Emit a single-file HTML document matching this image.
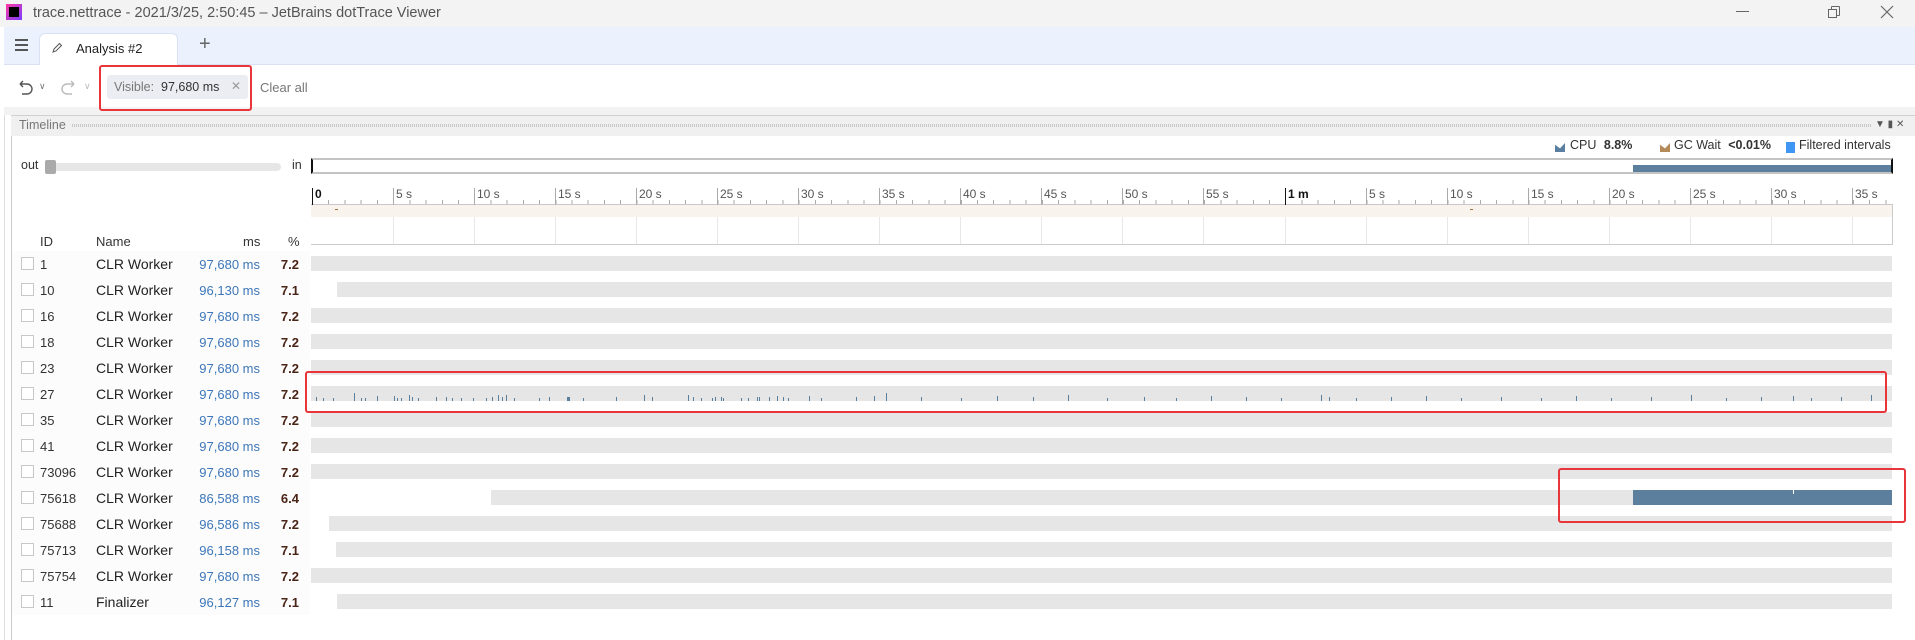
<!DOCTYPE html>
<html><head><meta charset="utf-8"><style>
*{margin:0;padding:0;box-sizing:border-box}
body{width:1915px;height:640px;overflow:hidden;background:#fff;font-family:"Liberation Sans",sans-serif;position:relative;color:#222}
.a{position:absolute;white-space:nowrap}
.row{position:absolute;left:0;width:1915px;height:26px;font-size:13px}
.cb{position:absolute;left:21px;top:6px;width:13px;height:13px;border:1px solid #c8c8c8;background:#fff}
.id{position:absolute;left:40px;top:6px;color:#333}
.nm{position:absolute;left:96px;top:5px;color:#222;font-size:14px}
.ms{position:absolute;right:1655px;top:6px;color:#3d76b8}
.pc{position:absolute;right:1616px;top:6px;color:#4a2416;font-weight:bold}
.bar{position:absolute;top:5px;height:15px;background:#e6e6e6;right:23px}
.maj{position:absolute;top:188px;width:1px;height:17px;background:#aaa}
.lab{position:absolute;top:187px;font-size:12px;color:#555}
.gl{position:absolute;top:217px;width:1px;height:27px;background:#e8e8e8}
.tk{position:absolute;bottom:0;width:1px;background:#5a7f9c}
</style></head><body>
<!-- title bar -->
<div class="a" style="left:0;top:0;width:1915px;height:27px;background:#f3f3f3"></div>
<div class="a" style="left:6px;top:4px;width:16px;height:16px;background:linear-gradient(135deg,#ff3aa0,#7a3cff);"></div>
<div class="a" style="left:9px;top:7px;width:10px;height:10px;background:#000"></div>
<div class="a" style="left:33px;top:5px;font-size:14.5px;color:#555">trace.nettrace - 2021/3/25, 2:50:45 – JetBrains dotTrace Viewer</div>
<div class="a" style="left:1736px;top:11px;width:13px;height:1px;background:#666"></div>
<div class="a" style="left:1831px;top:6px;width:9px;height:10px;border:1px solid #666;border-radius:1px"></div>
<div class="a" style="left:1828px;top:9px;width:9px;height:9px;border:1px solid #666;background:#f3f3f3"></div>
<svg class="a" style="left:1880px;top:5px" width="14" height="14"><path d="M1 1L13 13M13 1L1 13" stroke="#666" stroke-width="1.2"/></svg>
<!-- tab bar -->
<div class="a" style="left:4px;top:27px;width:1911px;height:38px;background:#ebf2fe;border-bottom:1px solid #d8e2f2"></div>
<div class="a" style="left:15px;top:39px;width:13px;height:2px;background:#555;box-shadow:0 5px 0 #555,0 10px 0 #555"></div>
<div class="a" style="left:39px;top:33px;width:139px;height:32px;background:#fff;border:1px solid #d8e2f2;border-bottom:none;border-radius:6px 6px 0 0"></div>
<svg class="a" style="left:51px;top:42px" width="12" height="12"><path d="M2 10L3 7L8.5 1.5L10.5 3.5L5 9Z" fill="none" stroke="#555" stroke-width="1"/></svg>
<div class="a" style="left:76px;top:41px;font-size:13px;color:#222">Analysis #2</div>
<div class="a" style="left:199px;top:33px;font-size:20px;color:#666">+</div>
<!-- toolbar -->
<svg class="a" style="left:16px;top:79px" width="18" height="16"><path d="M4 5H11A5 5 0 0 1 11 15H6M4 5L7 2M4 5L7 8" fill="none" stroke="#555" stroke-width="1.4"/></svg>
<div class="a" style="left:39px;top:81px;font-size:9px;color:#777">∨</div>
<svg class="a" style="left:60px;top:79px" width="18" height="16"><path d="M14 5H7A5 5 0 0 0 7 15H12M14 5L11 2M14 5L11 8" fill="none" stroke="#bbb" stroke-width="1.4"/></svg>
<div class="a" style="left:84px;top:81px;font-size:9px;color:#bbb">∨</div>
<!-- gap -->
<div class="a" style="left:4px;top:107px;width:1911px;height:8px;background:#f2f2f2"></div>
<div class="a" style="left:107px;top:75px;width:141px;height:24px;background:#ebedf2;border-radius:3px"></div>
<div class="a" style="left:114px;top:80px;font-size:12.5px;color:#777">Visible:&nbsp; <span style="color:#333">97,680 ms</span></div>
<div class="a" style="left:231px;top:79px;font-size:12px;color:#999">✕</div>
<div class="a" style="left:99px;top:65px;width:153px;height:46px;border:2px solid #e8353b;border-radius:3px"></div>
<div class="a" style="left:260px;top:80px;font-size:13px;color:#777">Clear all</div>
<div class="a" style="left:4px;top:115px;width:1px;height:525px;background:#ddd"></div>
<div class="a" style="left:11px;top:115px;width:1px;height:525px;background:#ccc"></div>
<div class="a" style="left:11px;top:115px;width:1904px;height:21px;background:#f0f0f0;border-top:1px solid #d0d0d0"></div>
<div class="a" style="left:19px;top:118px;font-size:12.5px;color:#777">Timeline</div>
<div class="a" style="left:72px;top:124px;width:1800px;height:3px;background:repeating-linear-gradient(90deg,#c8c8c8 0 1px,transparent 1px 2px)"></div>
<div class="a" style="left:1875px;top:119px;font-size:10px;color:#555">▼ ▮ ✕</div>
<!-- legend -->
<div class="a" style="left:1555px;top:143px;width:10px;height:9px;background:#5b7fa0;clip-path:polygon(0 20%,50% 60%,100% 0,100% 100%,0 100%)"></div>
<div class="a" style="left:1570px;top:138px;font-size:12.5px;color:#333">CPU <b style="margin-left:4px">8.8%</b></div>
<div class="a" style="left:1660px;top:143px;width:10px;height:9px;background:#b58a5a;clip-path:polygon(0 20%,50% 60%,100% 0,100% 100%,0 100%)"></div>
<div class="a" style="left:1674px;top:138px;font-size:12.5px;color:#333">GC Wait <b style="margin-left:4px">&lt;0.01%</b></div>
<div class="a" style="left:1786px;top:142px;width:9px;height:11px;background:#3f96f3"></div>
<div class="a" style="left:1799px;top:138px;font-size:12.5px;color:#333">Filtered intervals</div>
<!-- slider -->
<div class="a" style="left:21px;top:158px;font-size:12.5px;color:#333">out</div>
<div class="a" style="left:45px;top:163px;width:236px;height:8px;background:#e6e6e6;border-radius:4px"></div>
<div class="a" style="left:45px;top:160px;width:11px;height:14px;background:#aaa;border-radius:2px"></div>
<div class="a" style="left:292px;top:158px;font-size:12.5px;color:#333">in</div>
<!-- overview -->
<div class="a" style="left:311px;top:158px;width:1582px;height:16px;border-top:2px solid #c4c4c4;border-bottom:2px solid #c4c4c4;border-left:2px solid #111;border-right:2px solid #111"></div>
<div class="a" style="left:1633px;top:165px;width:258px;height:7px;background:#5b7f9c"></div>
<!-- ruler -->
<div class="a" style="left:312px;top:200px;width:1580px;height:4px;background:repeating-linear-gradient(90deg,#aaa 0 1px,transparent 1px 16.22px)"></div>
<div class="a" style="left:311px;top:204px;width:1582px;height:1px;background:#c8c8c8"></div>
<div class="a" style="left:311px;top:205px;width:1582px;height:12px;background:#f8f3ec"></div>
<div class="a" style="left:311px;top:244px;width:1582px;height:1px;background:#ccc"></div>
<div class="a" style="left:1892px;top:205px;width:1px;height:40px;background:#ccc"></div>
<div class="a" style="left:335px;top:209px;width:3px;height:1px;background:#a07040"></div>
<div class="a" style="left:1470px;top:209px;width:3px;height:1px;background:#a07040"></div>
<div class="maj" style="left:312px;background:#111"></div><div class="lab" style="left:315px;color:#111;font-weight:bold">0</div>
<div class="maj" style="left:393px"></div><div class="lab" style="left:396px">5 s</div><div class="gl" style="left:393px"></div>
<div class="maj" style="left:474px"></div><div class="lab" style="left:477px">10 s</div><div class="gl" style="left:474px"></div>
<div class="maj" style="left:555px"></div><div class="lab" style="left:558px">15 s</div><div class="gl" style="left:555px"></div>
<div class="maj" style="left:636px"></div><div class="lab" style="left:639px">20 s</div><div class="gl" style="left:636px"></div>
<div class="maj" style="left:717px"></div><div class="lab" style="left:720px">25 s</div><div class="gl" style="left:717px"></div>
<div class="maj" style="left:798px"></div><div class="lab" style="left:801px">30 s</div><div class="gl" style="left:798px"></div>
<div class="maj" style="left:879px"></div><div class="lab" style="left:882px">35 s</div><div class="gl" style="left:879px"></div>
<div class="maj" style="left:960px"></div><div class="lab" style="left:963px">40 s</div><div class="gl" style="left:960px"></div>
<div class="maj" style="left:1041px"></div><div class="lab" style="left:1044px">45 s</div><div class="gl" style="left:1041px"></div>
<div class="maj" style="left:1122px"></div><div class="lab" style="left:1125px">50 s</div><div class="gl" style="left:1122px"></div>
<div class="maj" style="left:1203px"></div><div class="lab" style="left:1206px">55 s</div><div class="gl" style="left:1203px"></div>
<div class="maj" style="left:1285px;background:#111"></div><div class="lab" style="left:1288px;color:#111;font-weight:bold">1 m</div><div class="gl" style="left:1285px"></div>
<div class="maj" style="left:1366px"></div><div class="lab" style="left:1369px">5 s</div><div class="gl" style="left:1366px"></div>
<div class="maj" style="left:1447px"></div><div class="lab" style="left:1450px">10 s</div><div class="gl" style="left:1447px"></div>
<div class="maj" style="left:1528px"></div><div class="lab" style="left:1531px">15 s</div><div class="gl" style="left:1528px"></div>
<div class="maj" style="left:1609px"></div><div class="lab" style="left:1612px">20 s</div><div class="gl" style="left:1609px"></div>
<div class="maj" style="left:1690px"></div><div class="lab" style="left:1693px">25 s</div><div class="gl" style="left:1690px"></div>
<div class="maj" style="left:1771px"></div><div class="lab" style="left:1774px">30 s</div><div class="gl" style="left:1771px"></div>
<div class="maj" style="left:1852px"></div><div class="lab" style="left:1855px">35 s</div><div class="gl" style="left:1852px"></div>
<!-- header -->
<div class="a" style="left:40px;top:234px;font-size:13px;color:#333">ID</div>
<div class="a" style="left:96px;top:234px;font-size:13px;color:#333">Name</div>
<div class="a" style="left:243px;top:234px;font-size:13px;color:#333">ms</div>
<div class="a" style="left:288px;top:234px;font-size:13px;color:#333">%</div>
<div class="a" style="left:12px;top:251px;width:298px;height:364px;background:#fcfcfc"></div>
<!-- rows -->
<div class="row" style="top:251px"><div class="cb"></div><div class="id">1</div><div class="nm">CLR Worker</div><div class="ms">97,680 ms</div><div class="pc">7.2</div><div class="bar" style="left:311px"></div></div>
<div class="row" style="top:277px"><div class="cb"></div><div class="id">10</div><div class="nm">CLR Worker</div><div class="ms">96,130 ms</div><div class="pc">7.1</div><div class="bar" style="left:337px"></div></div>
<div class="row" style="top:303px"><div class="cb"></div><div class="id">16</div><div class="nm">CLR Worker</div><div class="ms">97,680 ms</div><div class="pc">7.2</div><div class="bar" style="left:311px"></div></div>
<div class="row" style="top:329px"><div class="cb"></div><div class="id">18</div><div class="nm">CLR Worker</div><div class="ms">97,680 ms</div><div class="pc">7.2</div><div class="bar" style="left:311px"></div></div>
<div class="row" style="top:355px"><div class="cb"></div><div class="id">23</div><div class="nm">CLR Worker</div><div class="ms">97,680 ms</div><div class="pc">7.2</div><div class="bar" style="left:311px"></div></div>
<div class="row" style="top:381px"><div class="cb"></div><div class="id">27</div><div class="nm">CLR Worker</div><div class="ms">97,680 ms</div><div class="pc">7.2</div><div class="bar" style="left:311px">
<div class="tk" style="left:5px;height:4px"></div><div class="tk" style="left:12px;height:3px"></div><div class="tk" style="left:22px;height:3px"></div><div class="tk" style="left:43px;height:8px"></div><div class="tk" style="left:50px;height:3px"></div><div class="tk" style="left:54px;height:3px"></div><div class="tk" style="left:66px;height:5px"></div><div class="tk" style="left:83px;height:5px"></div><div class="tk" style="left:86px;height:3px"></div><div class="tk" style="left:90px;height:3px"></div><div class="tk" style="left:98px;height:6px"></div><div class="tk" style="left:101px;height:4px"></div><div class="tk" style="left:107px;height:3px"></div><div class="tk" style="left:125px;height:4px"></div><div class="tk" style="left:135px;height:4px"></div><div class="tk" style="left:141px;height:3px"></div><div class="tk" style="left:150px;height:3px"></div><div class="tk" style="left:162px;height:3px"></div><div class="tk" style="left:175px;height:3px"></div><div class="tk" style="left:181px;height:4px"></div><div class="tk" style="left:187px;height:6px"></div><div class="tk" style="left:191px;height:4px"></div><div class="tk" style="left:195px;height:6px"></div><div class="tk" style="left:203px;height:3px"></div><div class="tk" style="left:228px;height:3px"></div><div class="tk" style="left:238px;height:4px"></div><div class="tk" style="left:256px;height:4px;width:3px"></div><div class="tk" style="left:272px;height:3px"></div><div class="tk" style="left:305px;height:4px"></div><div class="tk" style="left:333px;height:6px"></div><div class="tk" style="left:341px;height:4px"></div><div class="tk" style="left:377px;height:6px"></div><div class="tk" style="left:382px;height:4px"></div><div class="tk" style="left:390px;height:3px"></div><div class="tk" style="left:401px;height:3px"></div><div class="tk" style="left:404px;height:4px"></div><div class="tk" style="left:410px;height:4px"></div><div class="tk" style="left:412px;height:3px"></div><div class="tk" style="left:430px;height:3px"></div><div class="tk" style="left:437px;height:3px"></div><div class="tk" style="left:446px;height:4px"></div><div class="tk" style="left:448px;height:4px"></div><div class="tk" style="left:458px;height:4px"></div><div class="tk" style="left:466px;height:5px"></div><div class="tk" style="left:472px;height:4px"></div><div class="tk" style="left:477px;height:3px"></div><div class="tk" style="left:498px;height:5px"></div><div class="tk" style="left:510px;height:3px"></div><div class="tk" style="left:545px;height:4px"></div><div class="tk" style="left:563px;height:5px"></div><div class="tk" style="left:575px;height:8px"></div><div class="tk" style="left:610px;height:4px"></div><div class="tk" style="left:650px;height:3px"></div><div class="tk" style="left:686px;height:5px"></div><div class="tk" style="left:722px;height:4px"></div><div class="tk" style="left:757px;height:6px"></div><div class="tk" style="left:796px;height:3px"></div><div class="tk" style="left:833px;height:4px"></div><div class="tk" style="left:865px;height:3px"></div><div class="tk" style="left:900px;height:5px"></div><div class="tk" style="left:935px;height:4px"></div><div class="tk" style="left:970px;height:3px"></div><div class="tk" style="left:1010px;height:6px"></div><div class="tk" style="left:1018px;height:4px"></div><div class="tk" style="left:1045px;height:3px"></div><div class="tk" style="left:1080px;height:4px"></div><div class="tk" style="left:1115px;height:5px"></div><div class="tk" style="left:1150px;height:3px"></div><div class="tk" style="left:1190px;height:4px"></div><div class="tk" style="left:1230px;height:3px"></div><div class="tk" style="left:1265px;height:5px"></div><div class="tk" style="left:1300px;height:3px"></div><div class="tk" style="left:1340px;height:4px"></div><div class="tk" style="left:1380px;height:6px"></div><div class="tk" style="left:1415px;height:3px"></div><div class="tk" style="left:1450px;height:4px"></div><div class="tk" style="left:1482px;height:5px"></div><div class="tk" style="left:1500px;height:3px"></div><div class="tk" style="left:1530px;height:4px"></div><div class="tk" style="left:1560px;height:6px"></div>
</div></div>
<div class="row" style="top:407px"><div class="cb"></div><div class="id">35</div><div class="nm">CLR Worker</div><div class="ms">97,680 ms</div><div class="pc">7.2</div><div class="bar" style="left:311px"></div></div>
<div class="row" style="top:433px"><div class="cb"></div><div class="id">41</div><div class="nm">CLR Worker</div><div class="ms">97,680 ms</div><div class="pc">7.2</div><div class="bar" style="left:311px"></div></div>
<div class="row" style="top:459px"><div class="cb"></div><div class="id">73096</div><div class="nm">CLR Worker</div><div class="ms">97,680 ms</div><div class="pc">7.2</div><div class="bar" style="left:311px"></div></div>
<div class="row" style="top:485px"><div class="cb"></div><div class="id">75618</div><div class="nm">CLR Worker</div><div class="ms">86,588 ms</div><div class="pc">6.4</div><div class="bar" style="left:491px"><div class="a" style="left:1142px;top:0;width:259px;height:15px;background:#5b7f9c"></div><div class="a" style="left:1302px;top:0;width:1px;height:4px;background:#fff"></div></div></div>
<div class="row" style="top:511px"><div class="cb"></div><div class="id">75688</div><div class="nm">CLR Worker</div><div class="ms">96,586 ms</div><div class="pc">7.2</div><div class="bar" style="left:329px"></div></div>
<div class="row" style="top:537px"><div class="cb"></div><div class="id">75713</div><div class="nm">CLR Worker</div><div class="ms">96,158 ms</div><div class="pc">7.1</div><div class="bar" style="left:336px"></div></div>
<div class="row" style="top:563px"><div class="cb"></div><div class="id">75754</div><div class="nm">CLR Worker</div><div class="ms">97,680 ms</div><div class="pc">7.2</div><div class="bar" style="left:311px"></div></div>
<div class="row" style="top:589px"><div class="cb"></div><div class="id">11</div><div class="nm">Finalizer</div><div class="ms">96,127 ms</div><div class="pc">7.1</div><div class="bar" style="left:337px"></div></div>
<!-- red boxes -->
<div class="a" style="left:305px;top:371px;width:1582px;height:42px;border:2px solid #e8353b;border-radius:3px"></div>
<div class="a" style="left:1558px;top:468px;width:348px;height:55px;border:2px solid #e8353b;border-radius:3px"></div>
</body></html>
